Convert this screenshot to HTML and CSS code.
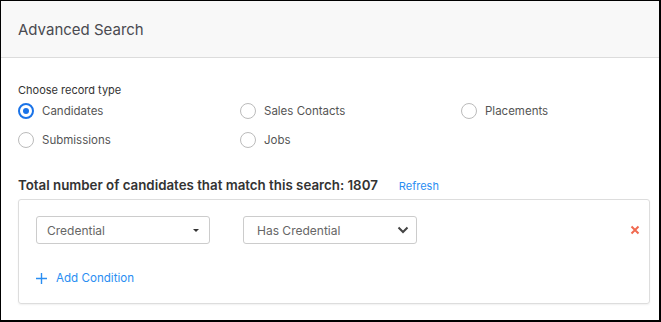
FILE: index.html
```html
<!DOCTYPE html>
<html lang="en">
<head>
    <meta charset="UTF-8">
    <meta name="viewport" content="width=device-width, initial-scale=1.0">
    <title>Advanced Search</title>
    <link rel="stylesheet" href="styles.css">
</head>
<body>
    <div class="panel">
        <div class="panel-header">
            <h1>Advanced Search</h1>
        </div>

        <div class="panel-body">
            <p class="group-label">Choose record type</p>
            <div class="radio-grid">
                <label class="radio checked"><span class="dot"></span>Candidates</label>
                <label class="radio"><span class="dot"></span>Sales Contacts</label>
                <label class="radio"><span class="dot"></span>Placements</label>
                <label class="radio"><span class="dot"></span>Submissions</label>
                <label class="radio"><span class="dot"></span>Jobs</label>
            </div>

            <div class="total">
                <span class="total-text">Total number of candidates that match this search: 1807</span>
                <a href="#" class="link">Refresh</a>
            </div>

            <div class="conditions">
                <div class="condition-row">
                    <div class="select">
                        <span>Credential</span>
                        <svg width="8" height="5" viewBox="0 0 8 5"><path d="M1 1h6L4 4z" fill="#333"/></svg>
                    </div>
                    <div class="select second">
                        <span>Has Credential</span>
                        <svg width="12" height="8" viewBox="0 0 12 8"><path d="M1.5 1.5L6 6l4.5-4.5" fill="none" stroke="#444" stroke-width="2"/></svg>
                    </div>
                    <span class="remove">
                        <svg width="10" height="10" viewBox="0 0 10 10"><path d="M1.5 1.5l7 7M8.5 1.5l-7 7" stroke="#f06a50" stroke-width="2"/></svg>
                    </span>
                </div>
                <a href="#" class="add-condition">
                    <svg class="plus" width="11" height="11" viewBox="0 0 11 11"><path d="M5.5 0v11M0 5.5h11" stroke="#2a8ef2" stroke-width="1.4"/></svg>
                    Add Condition
                </a>
            </div>
        </div>
    </div>
</body>
</html>
```

FILE: styles.css
```css
body {
    margin: 0;
    font-family: Inter, "Open Sans", sans-serif;
}

.panel {
    width: 661px;
    height: 322px;
    box-sizing: border-box;
    border-style: solid;
    border-color: #000;
    border-width: 1px 2px 2px 1px;
    background-color: #fff;
}

.panel-header {
    height: 56px;
    background-color: #f8f8f8;
    border-bottom: 1px solid #dcdcdc;
    display: flex;
    align-items: center;
    padding: 0 17px;
}

.panel-header h1 {
    margin: 0;
    font-size: 15px;
    font-weight: 400;
    color: #4a4a50;
}

.panel-body {
    padding: 25px 10px 0 17px;
}

.group-label {
    margin: 0;
    font-size: 11px;
    color: #333;
    line-height: 14px;
}

.radio-grid {
    display: grid;
    grid-template-columns: 222px 221px 1fr;
    row-gap: 12px;
    margin-top: 5px;
}

.radio {
    display: flex;
    align-items: center;
    gap: 8px;
    font-size: 11.5px;
    color: #555;
    height: 17px;
}

.dot {
    width: 14px;
    height: 14px;
    border: 1px solid #bbb;
    border-radius: 50%;
    box-sizing: content-box;
    position: relative;
}

.radio.checked .dot {
    border: 2px solid #1a73e8;
    width: 12px;
    height: 12px;
}

.radio.checked .dot::after {
    content: "";
    position: absolute;
    left: 3px;
    top: 3px;
    width: 6px;
    height: 6px;
    border-radius: 50%;
    background-color: #1a73e8;
}

.total {
    display: flex;
    align-items: baseline;
    margin-top: 29px;
    height: 17px;
}

.total-text {
    font-size: 13.3px;
    font-weight: 600;
    color: #333;
}

.link {
    margin-left: 21px;
    font-size: 11px;
    color: #2a8ef2;
    text-decoration: none;
}

.conditions {
    margin-top: 5px;
    width: 632px;
    height: 105px;
    box-sizing: border-box;
    border: 1px solid #ddd;
    border-radius: 3px;
    box-shadow: 0 1px 2px rgba(0, 0, 0, 0.06);
    padding: 16px 9px 0 17px;
}

.condition-row {
    display: flex;
    align-items: center;
}

.select {
    width: 174px;
    height: 28px;
    box-sizing: border-box;
    border: 1px solid #ccc;
    border-radius: 3px;
    display: flex;
    align-items: center;
    justify-content: space-between;
    padding: 0 9px 0 10px;
    font-size: 12px;
    color: #666;
}

.select.second {
    margin-left: 33px;
    padding: 0 7px 0 13px;
}

.remove {
    margin-left: auto;
    display: flex;
}

.add-condition {
    display: flex;
    align-items: center;
    gap: 9px;
    margin-top: 27px;
    font-size: 11.6px;
    color: #2a8ef2;
    text-decoration: none;
}
```
